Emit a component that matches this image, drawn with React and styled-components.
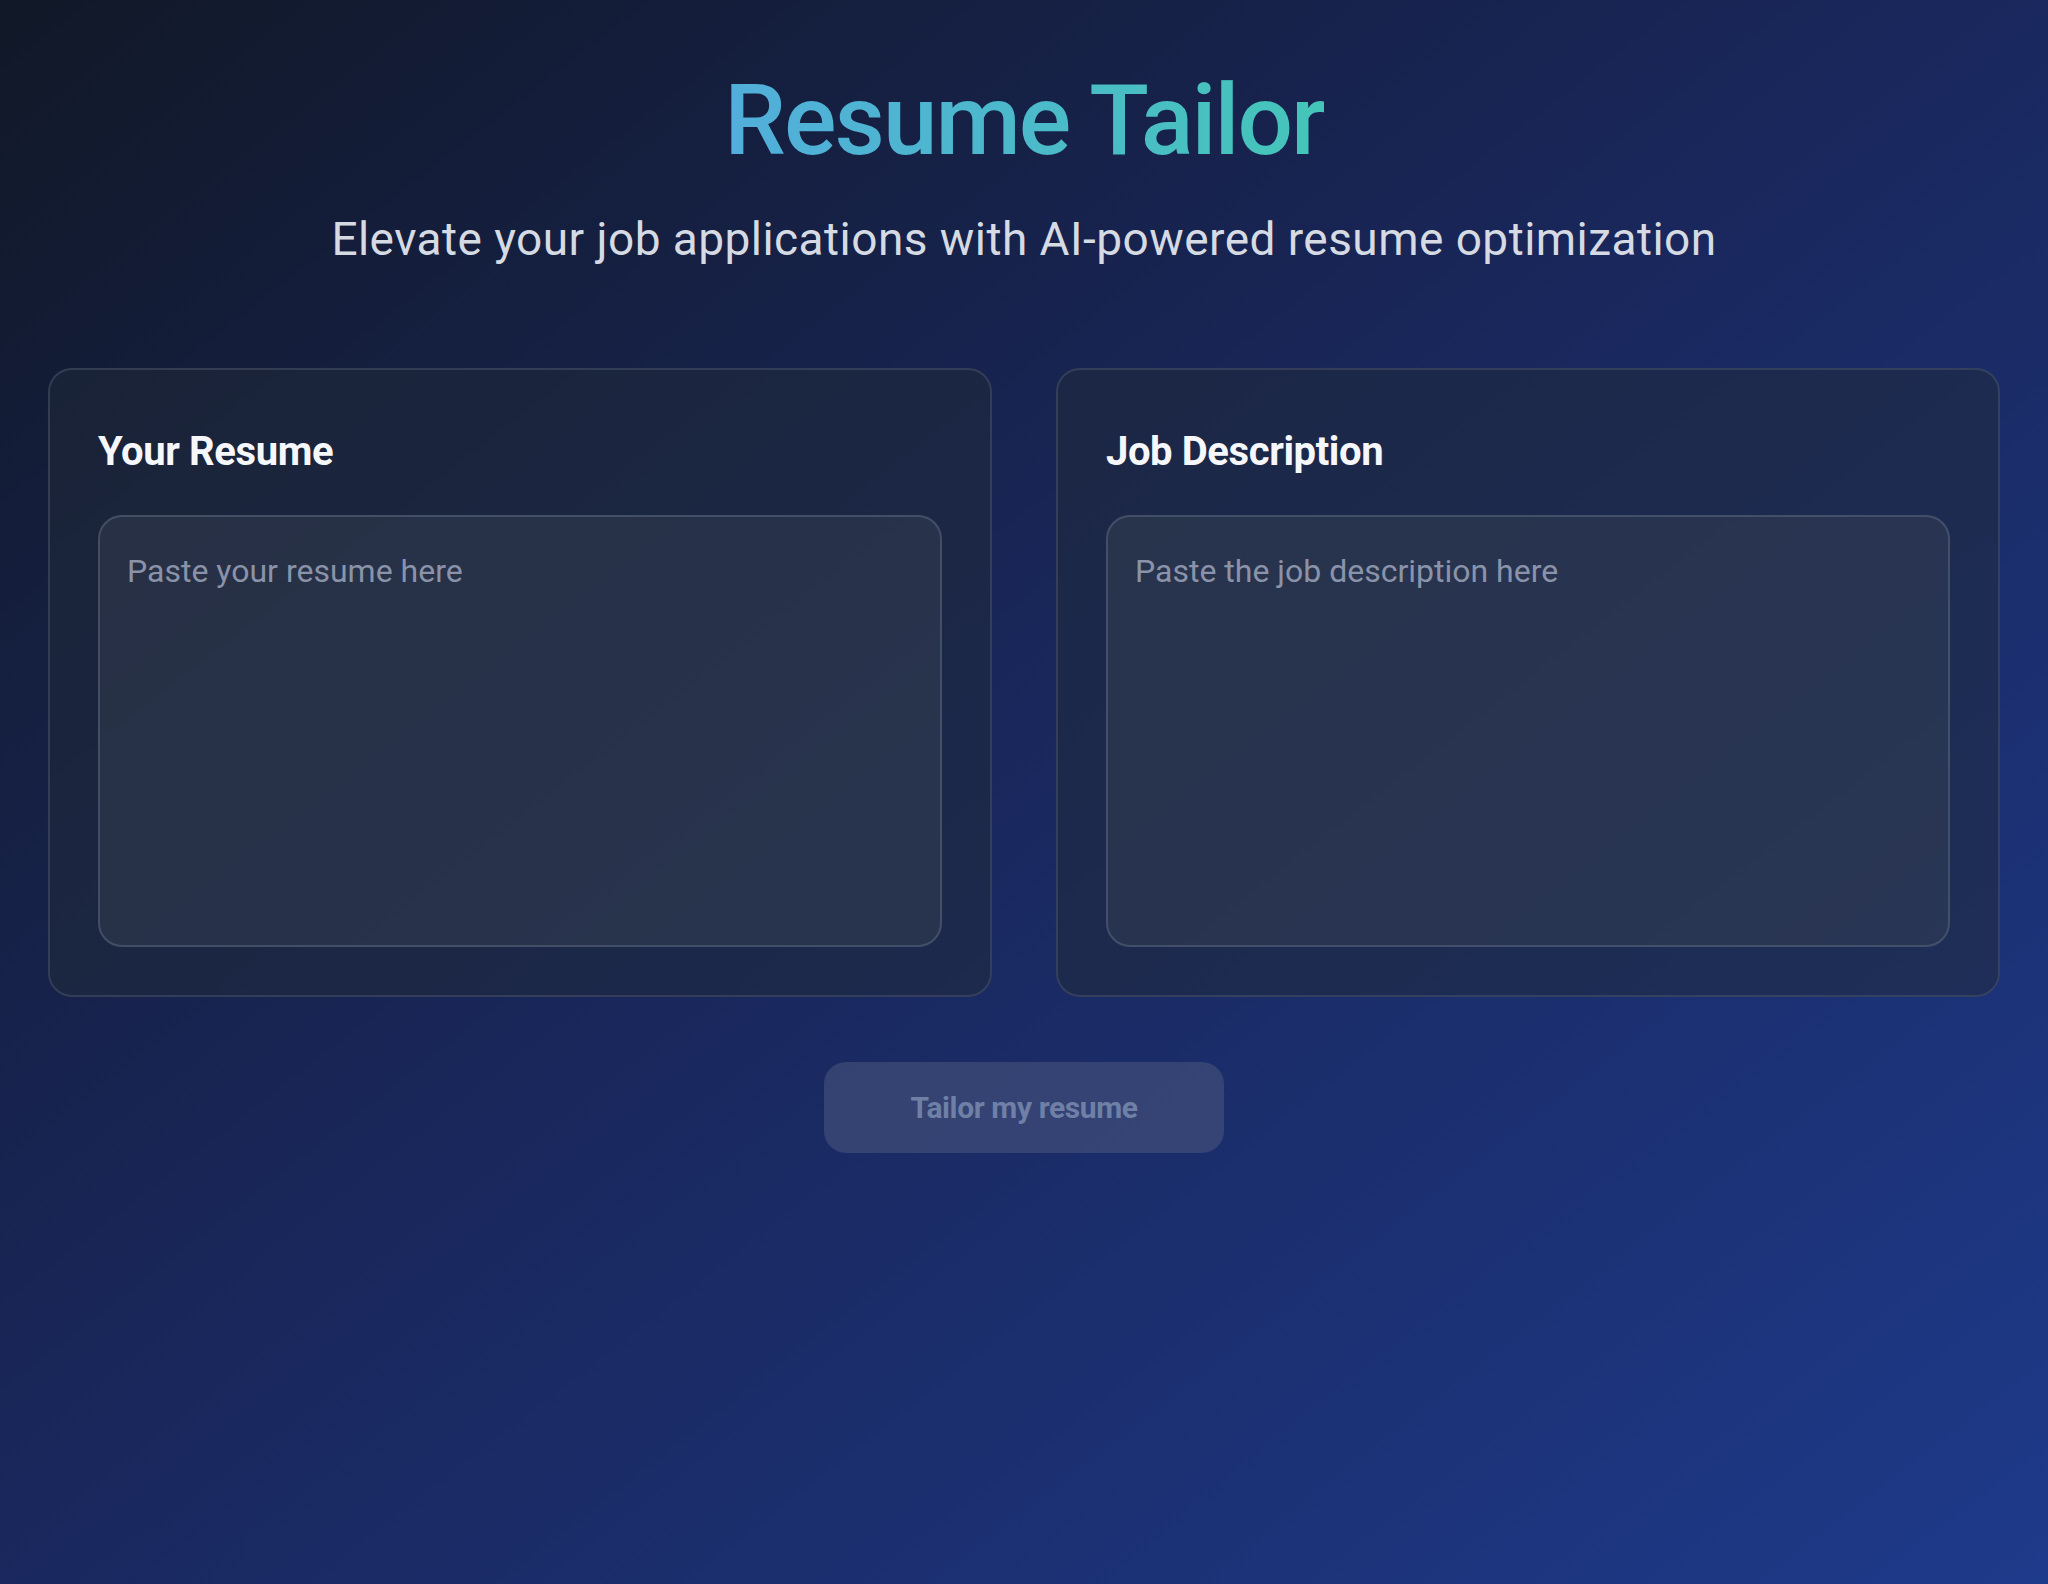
import React from "react";
import styled, { createGlobalStyle } from "styled-components";

const Global = createGlobalStyle`
  html, body { margin: 0; padding: 0; }
  body { font-family: Roboto, "Noto Sans", "Liberation Sans", sans-serif; }
  * { box-sizing: border-box; }
`;

const Page = styled.div`
  min-height: 100vh;
  background: linear-gradient(to bottom right, #111827 0%, #19275c 48%, #1e3a8a 100%);
  padding: 72px 48px 80px;
  display: flex;
  flex-direction: column;
  align-items: center;
`;

const Header = styled.header`
  text-align: center;
  display: flex;
  flex-direction: column;
  align-items: center;
`;

const Title = styled.h1`
  display: inline-block;
  margin: 0;
  font-size: 98px;
  line-height: 1;
  font-weight: 500;
  letter-spacing: -2px;
  background: linear-gradient(90deg, #52aedb, #45c5b9);
  -webkit-background-clip: text;
  background-clip: text;
  color: transparent;
`;

const Subtitle = styled.p`
  margin: 38px 0 0;
  font-size: 46px;
  line-height: 63px;
  font-weight: 400;
  letter-spacing: 0.45px;
  color: #d5dae3;
`;

const Grid = styled.div`
  margin-top: 97px;
  width: 100%;
  display: grid;
  grid-template-columns: 1fr 1fr;
  gap: 64px;
`;

const Card = styled.section`
  background: rgba(31, 41, 55, 0.5);
  border: 2px solid rgba(75, 85, 110, 0.5);
  border-radius: 24px;
  padding: 48px;
  display: flex;
  flex-direction: column;
`;

const CardTitle = styled.h2`
  margin: 4px 0 33px;
  font-size: 40px;
  line-height: 60px;
  font-weight: 700;
  letter-spacing: -0.4px;
  color: #f5f7fa;
`;

const Input = styled.textarea`
  display: block;
  width: 100%;
  height: 432px;
  resize: none;
  padding: 30px 24px 30px 27px;
  border: 2px solid rgba(90, 102, 128, 0.55);
  border-radius: 24px;
  background: rgba(55, 65, 81, 0.45);
  color: #e5e7eb;
  font-family: Roboto, "Noto Sans", "Liberation Sans", sans-serif;
  font-size: 32px;
  line-height: 1.5;
  outline: none;
  &::placeholder { color: #8a93a9; }
`;

const Button = styled.button`
  margin-top: 65px;
  width: 400px;
  height: 91px;
  border: none;
  border-radius: 22px;
  background: rgba(75, 88, 125, 0.55);
  color: #6f80a7;
  font-family: Roboto, "Noto Sans", "Liberation Sans", sans-serif;
  font-size: 30px;
  font-weight: 700;
  letter-spacing: -0.4px;
  cursor: not-allowed;
`;

const panels = [
  { title: "Your Resume", placeholder: "Paste your resume here" },
  { title: "Job Description", placeholder: "Paste the job description here" },
];

export default function App() {
  return (
    <>
      <Global />
      <Page>
        <Header>
          <Title>Resume Tailor</Title>
          <Subtitle>Elevate your job applications with AI-powered resume optimization</Subtitle>
        </Header>
        <Grid>
          {panels.map((p) => (
            <Card key={p.title}>
              <CardTitle>{p.title}</CardTitle>
              <Input placeholder={p.placeholder} />
            </Card>
          ))}
        </Grid>
        <Button disabled>Tailor my resume</Button>
      </Page>
    </>
  );
}
